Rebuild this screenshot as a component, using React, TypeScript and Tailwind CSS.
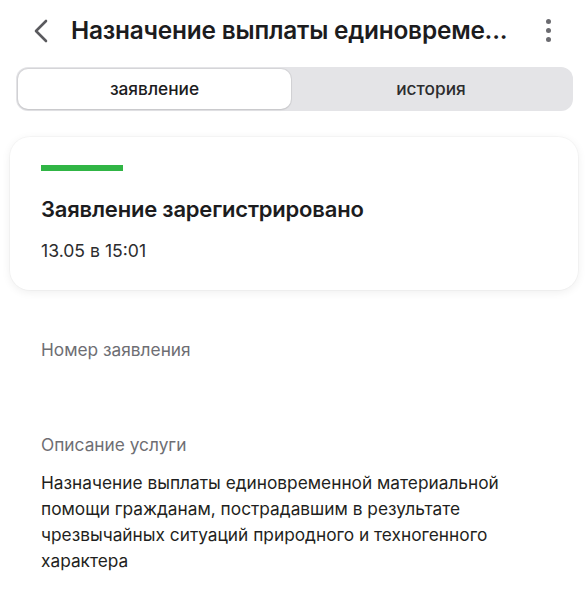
import React from "react";

function BackIcon() {
  return (
    <svg width="16" height="24" viewBox="0 0 16 24" fill="none">
      <path d="M13 2 L3 12 L13 22" stroke="#5a5a5e" strokeWidth="2.6" strokeLinecap="round" strokeLinejoin="round" />
    </svg>
  );
}

function Kebab() {
  return (
    <div className="flex flex-col items-center gap-[4px]">
      <span className="w-[5px] h-[5px] rounded-full bg-[#6b6b70]" />
      <span className="w-[5px] h-[5px] rounded-full bg-[#6b6b70]" />
      <span className="w-[5px] h-[5px] rounded-full bg-[#6b6b70]" />
    </div>
  );
}

export default function App() {
  return (
    <div
      className="w-[588px] h-[611px] bg-white text-[#1c1c1e] overflow-hidden"
      style={{ fontFamily: "Inter, 'Noto Sans', sans-serif" }}
    >
      {/* header */}
      <div className="flex items-center h-[67px] pl-[33px] pr-[37px] pb-[6px]">
        <BackIcon />
        <div className="ml-[22px] text-[24.4px] font-semibold tracking-[-0.2px] whitespace-nowrap">
          Назначение выплаты единовреме...
        </div>
        <div className="ml-auto">
          <Kebab />
        </div>
      </div>

      {/* tabs */}
      <div className="ml-[16px] mr-[15px] h-[44px] rounded-[12px] bg-[#e4e4e7] p-[2px] flex">
        <div className="w-[273px] rounded-[10px] bg-white shadow-[0_0_0_1px_rgba(0,0,0,0.06),0_1px_2px_rgba(0,0,0,0.08)] flex items-center justify-center text-[17.3px] font-medium">
          заявление
        </div>
        <div className="flex-1 flex items-center justify-center text-[17.3px] font-medium text-[#2c2c2e]">
          история
        </div>
      </div>

      {/* status card */}
      <div className="mx-[10px] mt-[26px] h-[153px] rounded-[20px] bg-white shadow-[0_0_0_1px_rgba(0,0,0,0.025),0_2px_10px_rgba(0,0,0,0.07)] pl-[31px] pt-[28px]">
        <div className="w-[82px] h-[6px] bg-[#30b545]" />
        <div className="mt-[22px] text-[22px] font-semibold tracking-[-0.2px]">Заявление зарегистрировано</div>
        <div className="mt-[12px] text-[17.6px] text-[#2c2c2e]">13.05 в 15:01</div>
      </div>

      {/* details */}
      <div className="px-[41px]">
        <div className="mt-[47px] text-[17.3px] text-[#6e6e73]">Номер заявления</div>
        <div className="mt-[69px] text-[17.3px] text-[#6e6e73]">Описание услуги</div>
        <div className="mt-[12px] text-[17.3px] leading-[26px] text-[#1f1f21] w-[480px]">
          Назначение выплаты единовременной материальной помощи гражданам, пострадавшим в результате
          чрезвычайных ситуаций природного и техногенного характера
        </div>
      </div>
    </div>
  );
}
